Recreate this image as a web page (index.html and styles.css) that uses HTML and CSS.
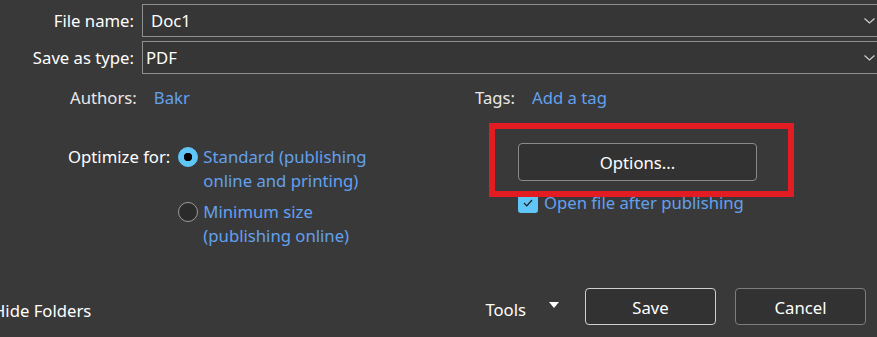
FILE: index.html
```html
<!DOCTYPE html>
<html lang="en">
<head>
    <meta charset="UTF-8">
    <title>Save As</title>
    <link rel="stylesheet" href="styles.css">
</head>
<body>
    <div class="fields">
        <div class="field-row">
            <label class="field-label">File name:</label>
            <div class="combo">
                <span>Doc1</span>
                <svg class="chevron" width="11" height="6" viewBox="0 0 11 6"><path d="M0.5 0.5 L5.5 5 L10.5 0.5" fill="none" stroke="#cfcfcf" stroke-width="1.2"/></svg>
            </div>
        </div>
        <div class="field-row">
            <label class="field-label">Save as type:</label>
            <div class="combo combo-type">
                <span>PDF</span>
                <svg class="chevron" width="11" height="6" viewBox="0 0 11 6"><path d="M0.5 0.5 L5.5 5 L10.5 0.5" fill="none" stroke="#cfcfcf" stroke-width="1.2"/></svg>
            </div>
        </div>
    </div>

    <div class="meta">
        <div class="meta-group meta-authors">
            <span class="meta-label">Authors:</span>
            <a class="link">Bakr</a>
        </div>
        <div class="meta-group">
            <span class="meta-label">Tags:</span>
            <a class="link">Add a tag</a>
        </div>
    </div>

    <div class="publish">
        <div class="optimize">
            <span class="optimize-label">Optimize for:</span>
            <div class="radios">
                <div class="radio-item">
                    <span class="radio checked"></span>
                    <span class="link">Standard (publishing<br>online and printing)</span>
                </div>
                <div class="radio-item">
                    <span class="radio"></span>
                    <span class="link">Minimum size<br>(publishing online)</span>
                </div>
            </div>
        </div>
        <div class="publish-right">
            <button class="btn btn-options">Options...</button>
            <div class="check-row">
                <span class="checkbox">
                    <svg width="10" height="8" viewBox="0 0 10 8"><path d="M1 4 L3.8 6.8 L9 1" fill="none" stroke="#1b1b1b" stroke-width="1.2"/></svg>
                </span>
                <span class="link">Open file after publishing</span>
            </div>
            <div class="highlight"></div>
        </div>
    </div>

    <div class="footer">
        <span class="hide-folders">Hide Folders</span>
        <span class="tools">Tools</span>
        <span class="tools-arrow"></span>
        <button class="btn btn-save">Save</button>
        <button class="btn btn-cancel">Cancel</button>
    </div>
</body>
</html>
```

FILE: styles.css
```css
* {
    box-sizing: border-box;
}
body {
    margin: 0;
    background: #393939;
    color: #ffffff;
    font-family: 'Noto Sans', sans-serif;
    font-size: 16.7px;
    overflow: hidden;
}
.fields {
    padding-top: 4px;
    display: flex;
    flex-direction: column;
    gap: 4px;
}
.field-row {
    display: flex;
    align-items: center;
}
.field-label {
    width: 134px;
    text-align: right;
    margin-right: 8px;
}
.combo {
    flex: 1;
    height: 33px;
    border: 1px solid #8e8e8e;
    border-right: none;
    background: #363636;
    display: flex;
    align-items: center;
    padding-left: 8px;
    padding-right: 2px;
}
.combo-type {
    padding-left: 3px;
}
.combo span {
    flex: 1;
}
.chevron {
    display: block;
}
.meta {
    margin-top: 12px;
    display: flex;
    line-height: 24px;
    padding-left: 70px;
}
.meta-group {
    display: flex;
    gap: 17px;
}
.meta-authors {
    width: 405px;
}
.meta-label {
    color: #e8e8e8;
}
.link {
    color: #63a1ee;
}
.publish {
    margin-top: 33px;
    display: flex;
}
.optimize {
    display: flex;
    padding-top: 2px;
    padding-left: 68px;
    width: 450px;
    line-height: 24px;
}
.optimize-label {
    margin-right: 8px;
}
.radios {
    display: flex;
    flex-direction: column;
    gap: 7px;
}
.radio-item {
    display: flex;
    align-items: flex-start;
    gap: 5px;
}
.radio {
    width: 20px;
    height: 20px;
    margin-top: 2px;
    border-radius: 50%;
    border: 1px solid #9d9d9d;
    background: #2b2b2b;
    flex-shrink: 0;
}
.radio.checked {
    border-color: #60c6f7;
    background: radial-gradient(circle, #000000 0 4px, #60c6f7 4.5px);
}
.publish-right {
    position: relative;
    padding-left: 68px;
}
.btn {
    font-family: inherit;
    font-size: 16.7px;
    color: #ffffff;
    background: #323232;
    border: 1px solid #8a8a8a;
    border-radius: 4px;
    cursor: pointer;
}
.btn-options {
    width: 239px;
    height: 38px;
    display: block;
}
.check-row {
    margin-top: 10px;
    display: flex;
    align-items: center;
    gap: 6px;
    line-height: 24px;
}
.checkbox {
    width: 20px;
    height: 19px;
    border-radius: 3px;
    background: #60c6f7;
    display: flex;
    align-items: center;
    justify-content: center;
}
.highlight {
    position: absolute;
    left: 39px;
    top: -20px;
    width: 305px;
    height: 74px;
    border: 6px solid #e31b22;
}
.footer {
    margin-top: 40px;
    display: flex;
    align-items: center;
    padding-right: 11px;
}
.hide-folders {
    margin-left: -7px;
    margin-right: auto;
    padding-top: 8px;
}
.tools {
    padding-top: 5px;
}
.tools-arrow {
    margin-left: 23px;
    width: 0;
    height: 0;
    border-left: 5px solid transparent;
    border-right: 5px solid transparent;
    border-top: 6px solid #ffffff;
    margin-top: -4px;
}
.btn-save,
.btn-cancel {
    width: 131px;
    height: 37px;
    padding-top: 3px;
}
.btn-save {
    margin-left: 26px;
    border-color: #cfcfcf;
}
.btn-cancel {
    margin-left: 19px;
    border-color: #7d7d7d;
}
```
